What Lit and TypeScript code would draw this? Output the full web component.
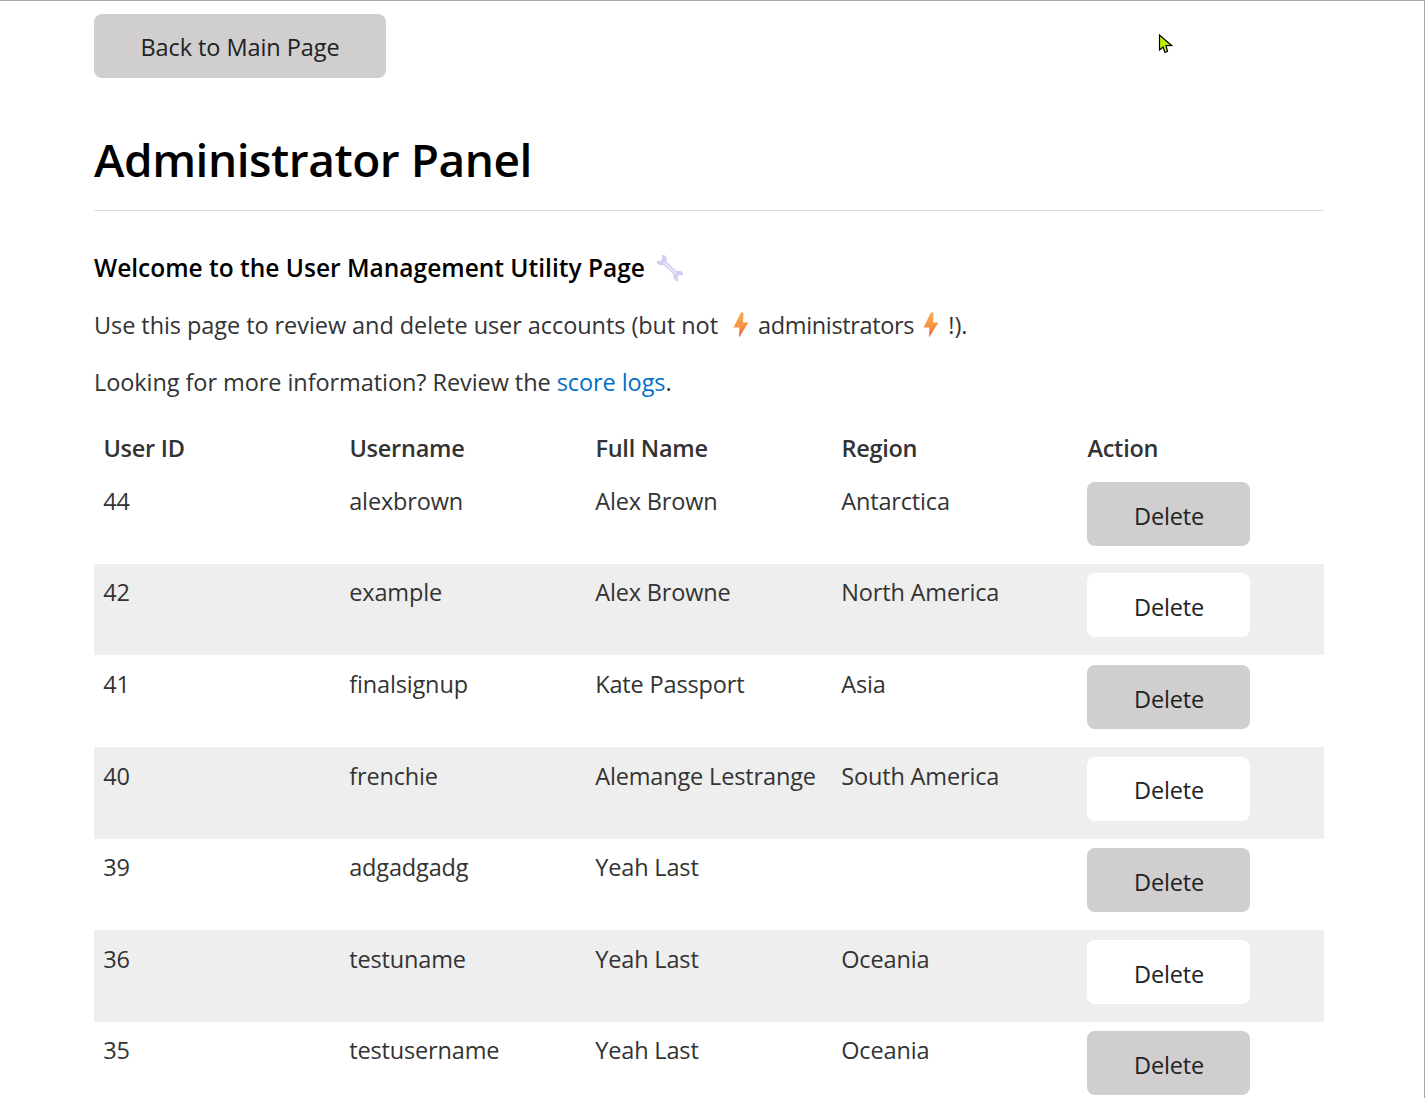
import {LitElement, html, css} from 'lit';
import {customElement} from 'lit/decorators.js';

const rows = [
  ['44', 'alexbrown', 'Alex Brown', 'Antarctica'],
  ['42', 'example', 'Alex Browne', 'North America'],
  ['41', 'finalsignup', 'Kate Passport', 'Asia'],
  ['40', 'frenchie', 'Alemange Lestrange', 'South America'],
  ['39', 'adgadgadg', 'Yeah Last', ''],
  ['36', 'testuname', 'Yeah Last', 'Oceania'],
  ['35', 'testusername', 'Yeah Last', 'Oceania'],
];

const bolt = (id: string) => html`
  <svg class="bolt" viewBox="0 0 16 26" width="16" height="26">
    <defs>
      <linearGradient id=${id} x1="0" y1="0" x2="0" y2="1">
        <stop offset="0" stop-color="#f9a94f"></stop>
        <stop offset="0.55" stop-color="#f79342"></stop>
        <stop offset="1" stop-color="#ea4f45"></stop>
      </linearGradient>
    </defs>
    <path d="M8 0.5 H10.5 L10 10.5 H15.5 L6 25.5 L6.5 15.5 H0.5 Z" fill="url(#${id})"></path>
  </svg>
`;

@customElement('app-root')
export class AppRoot extends LitElement {
  static styles = css`
    :host {
      display: block;
      position: relative;
      box-sizing: border-box;
      height: 1098px;
      overflow: hidden;
      border-top: 1px solid #a8a8a8;
      border-right: 1px solid #a8a8a8;
      padding: 13px 100px 0 94px;
      background: #fff;
      color: #333;
      font-family: 'Open Sans', 'Noto Sans', sans-serif;
      font-size: 23.5px;
      letter-spacing: -0.07px;
    }
    button {
      display: block;
      border: none;
      border-radius: 8px;
      background: #d0cecf;
      color: #222;
      font: inherit;
      letter-spacing: inherit;
      height: 64px;
      padding: 2px 0 0;
    }
    .back {
      width: 292px;
    }
    h1 {
      margin: 50px 0 0;
      padding-bottom: 19px;
      border-bottom: 1px solid #ddd;
      color: #000;
      font-size: 46px;
      font-weight: 600;
      line-height: 63px;
      letter-spacing: -0.45px;
    }
    h3 {
      margin: 41px 0 0;
      color: #000;
      font-size: 24.5px;
      font-weight: 600;
      line-height: 32px;
      letter-spacing: 0;
      display: flex;
      align-items: center;
    }
    .wrench {
      margin-left: 12px;
    }
    p {
      margin: 25px 0 0;
      line-height: 32px;
    }
    .bolt {
      vertical-align: -4px;
    }
    .b1 {
      margin: 0 3px 0 9px;
    }
    .b2 {
      margin: 0 3px;
    }
    .adm {
      letter-spacing: -0.35px;
    }
    a {
      color: #0070c9;
      text-decoration: none;
    }
    table {
      width: 1230px;
      margin-top: 34px;
      table-layout: fixed;
      border-collapse: collapse;
    }
    th,
    td {
      padding: 9.6px;
      text-align: left;
      vertical-align: top;
    }
    th {
      padding: 0 9.4px 7.3px;
      font-weight: 600;
      line-height: 33px;
      letter-spacing: -0.25px;
    }
    td {
      line-height: 38px;
      white-space: nowrap;
      letter-spacing: -0.15px;
    }
    td:not(:last-child) {
      padding-left: 9.2px;
    }
    tbody tr {
      height: 91.6px;
    }
    tbody tr:nth-child(even) {
      background: #eee;
    }
    tbody tr:nth-child(even) button {
      background: #fff;
    }
    .del {
      width: 163px;
      margin: 0 0 0 -1px;
      padding: 3.6px 0 0 2px;
    }
    .cursor {
      position: absolute;
      left: 1158px;
      top: 32px;
    }
  `;

  render() {
    return html`
      <button class="back">Back to Main Page</button>
      <h1>Administrator Panel</h1>
      <h3>
        Welcome to the User Management Utility Page
        <svg class="wrench" viewBox="-13 -13 26 26" width="26" height="26">
          <g transform="rotate(43) scale(0.98)">
            <path
              d="M-12 -1.5 L-16 -4.5 A6 6 0 0 1 -7 -2.2 L7 -2.2 A6 6 0 0 1 16 -4.5 L12 -1.5 L12 1.5 L16 4.5 A6 6 0 0 1 7 2.2 L-7 2.2 A6 6 0 0 1 -16 4.5 L-12 1.5 Z"
              fill="#d3cdf0"
            ></path>
            <path d="M-9 0 H9" stroke="#f0eefb" stroke-width="1.2"></path>
          </g>
        </svg>
      </h3>
      <p>
        Use this page to review and delete user accounts (but not
        <span class="b1">${bolt('g1')}</span><span class="adm">administrators</span><span class="b2">${bolt('g2')}</span>!).
      </p>
      <p>Looking for more information? Review the <a href="#">score logs</a>.</p>
      <table>
        <thead>
          <tr>
            <th>User ID</th>
            <th>Username</th>
            <th>Full Name</th>
            <th>Region</th>
            <th>Action</th>
          </tr>
        </thead>
        <tbody>
          ${rows.map(
            (r) => html`
              <tr>
                ${r.map((c) => html`<td>${c}</td>`)}
                <td><button class="del">Delete</button></td>
              </tr>
            `
          )}
        </tbody>
      </table>
      <svg class="cursor" viewBox="0 0 16 22" width="16" height="22">
        <path d="M9 12.5 H14.5" stroke="#888" stroke-width="1.5"></path>
        <path
          d="M1.5 2 V17 L5 14 L7 19.5 L9.5 18.5 L8 12.5 H13.5 Z"
          fill="#bff000"
          stroke="#000"
          stroke-width="1.2"
        ></path>
      </svg>
    `;
  }
}
